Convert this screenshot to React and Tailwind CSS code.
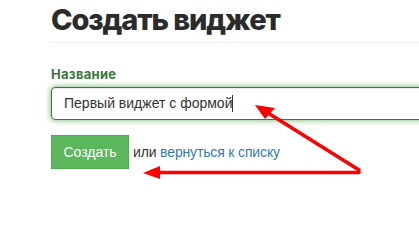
import React from 'react';

const App = () => {
  return (
    <div className="relative w-[419px] h-[216px] overflow-hidden bg-white font-['Liberation_Sans',Arial,sans-serif] text-[#333]">
      <div className="pl-[51px]">
        {/* Title */}
        <h1 className="pt-[3px] pb-[6px] border-b border-[#eeeeee] font-['Inter',sans-serif] font-extrabold text-[29px] leading-[33px] text-[#2b2b2b] tracking-[-1.1px] whitespace-nowrap">
          Создать виджет
        </h1>

        {/* Form */}
        <div className="pt-[23px]">
          <label className="block font-['Inter',sans-serif] font-bold text-[13px] leading-[16px] tracking-[0.3px] text-[#3c763d]">
            Название
          </label>
          <div className="mt-[5px] w-[420px] h-[33px] border border-[#3c763d] rounded-[4px] shadow-[inset_0_1px_1px_rgba(0,0,0,0.075),0_0_6px_#67b168] flex items-center px-[12px] text-[14px]">
            <span>Первый виджет с формой</span>
            <span className="w-px h-[17px] bg-[#333]" />
          </div>

          <div className="mt-[15px] flex items-center gap-[4px] text-[14px]">
            <button className="w-[78px] h-[34px] bg-[#5cb85c] border border-[#4cae4c] text-white text-[14px]">
              Создать
            </button>
            <span className="tracking-[-0.15px]">
              или <a className="text-[#337ab7]">вернуться к списку</a>
            </span>
          </div>
        </div>
      </div>

      {/* Red annotation arrows */}
      <svg className="absolute inset-0 pointer-events-none" width="419" height="216" viewBox="0 0 419 216">
        <g stroke="#ff0000" strokeWidth="3.5" strokeLinecap="round" fill="none">
          <line x1="359" y1="170" x2="268" y2="113" />
          <line x1="359" y1="172.5" x2="156" y2="172.5" />
        </g>
        <g fill="#ff0000">
          <polygon points="255,105 275,108 265,119" />
          <polygon points="143,173 160,166 160,179" />
        </g>
      </svg>
    </div>
  );
};

export default App;
